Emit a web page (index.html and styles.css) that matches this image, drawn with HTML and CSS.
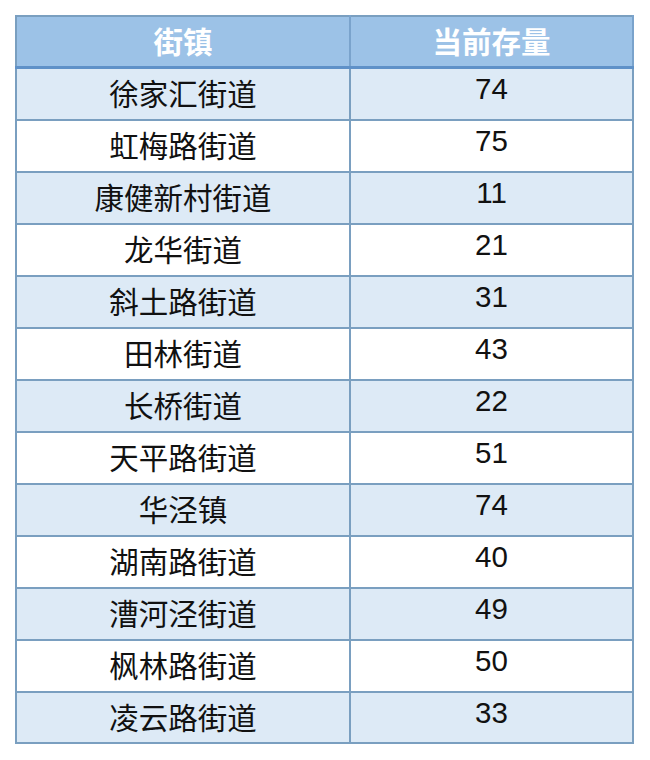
FILE: index.html
```html
<!DOCTYPE html>
<html lang="zh-CN">
<head>
<meta charset="utf-8">
<link rel="stylesheet" href="styles.css">
</head>
<body>
<table class="stock">
  <thead>
    <tr><th class="c1">街镇</th><th class="c2">当前存量</th></tr>
  </thead>
  <tbody>
    <tr class="alt"><td class="name">徐家汇街道</td><td class="num">74</td></tr>
    <tr><td class="name">虹梅路街道</td><td class="num">75</td></tr>
    <tr class="alt"><td class="name">康健新村街道</td><td class="num">11</td></tr>
    <tr><td class="name">龙华街道</td><td class="num">21</td></tr>
    <tr class="alt"><td class="name">斜土路街道</td><td class="num">31</td></tr>
    <tr><td class="name">田林街道</td><td class="num">43</td></tr>
    <tr class="alt"><td class="name">长桥街道</td><td class="num">22</td></tr>
    <tr><td class="name">天平路街道</td><td class="num">51</td></tr>
    <tr class="alt"><td class="name">华泾镇</td><td class="num">74</td></tr>
    <tr><td class="name">湖南路街道</td><td class="num">40</td></tr>
    <tr class="alt"><td class="name">漕河泾街道</td><td class="num">49</td></tr>
    <tr><td class="name">枫林路街道</td><td class="num">50</td></tr>
    <tr class="alt last"><td class="name">凌云路街道</td><td class="num">33</td></tr>
  </tbody>
</table>
</body>
</html>
```
FILE: styles.css
```css
html, body {
  margin: 0;
  background: #ffffff;
}
body {
  padding: 15px;
  font-family: "Noto Sans CJK SC", "Noto Sans", sans-serif;
}
.stock {
  border-collapse: collapse;
  width: 619px;
  border: 2px solid #7a9fc0;
  table-layout: fixed;
}
.stock th, .stock td {
  border: 2px solid #7a9fc0;
  padding: 0;
  text-align: center;
  vertical-align: middle;
}
.stock th {
  background: #9cc2e7;
  color: #ffffff;
  font-weight: 700;
  font-size: 29.5px;
  line-height: 47px;
  padding-bottom: 2px;
  border-bottom: 3px solid #5f91c8;
  border-right-color: #7aa3cc;
}
.c1 { width: 332px; }
.stock td {
  color: #111111;
  font-size: 29.5px;
}
.stock td.name {
  line-height: 46px;
  padding-bottom: 4px;
}
.stock td.num {
  font-family: "Liberation Sans", sans-serif;
  font-size: 29.5px;
  line-height: 40px;
  padding-bottom: 10px;
}
.stock tr.last td.name {
  padding-bottom: 3px;
}
.stock tr.last td.num {
  padding-bottom: 9px;
}
.stock tr.alt td {
  background: #ddeaf6;
}
```
